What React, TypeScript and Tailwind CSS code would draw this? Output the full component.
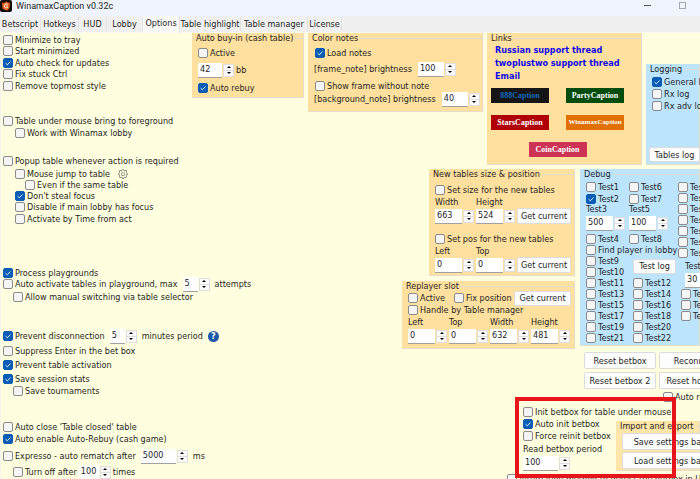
import { useState, type ReactNode } from "react";
import clsx from "clsx";
import { BsGear } from "react-icons/bs";

const TABS = [
  { name: "Betscript", width: "w-[41px]" },
  { name: "Hotkeys", width: "w-[38px]" },
  { name: "HUD", width: "w-[28px]" },
  { name: "Lobby", width: "w-[36px]" },
  { name: "Options", width: "w-[37px]" },
  { name: "Table highlight", width: "w-[61px]" },
  { name: "Table manager", width: "w-[67px]" },
  { name: "License", width: "w-[34px]" },
];

const SITES = [
  { name: "888Caption", style: "bg-[#151515] text-[#1668b8] text-[8px]" },
  { name: "PartyCaption", style: "bg-[#004c0b] text-white text-[8px]" },
  { name: "StarsCaption", style: "bg-[#b00008] text-white text-[8px]" },
  { name: "WinamaxCaption", style: "bg-[#e07000] text-white text-[7px]" },
  { name: "CoinCaption", style: "bg-[#cc3355] text-white text-[8px] col-span-2 justify-self-center" },
];

type CheckProps = { label: string; on?: boolean; className?: string };

function Check({ label, on = false, className }: CheckProps) {
  return (
    <label className={clsx("flex h-[11px] shrink-0 items-center gap-[2px]", className)}>
      <span className="relative size-[10px] shrink-0">
        <input
          type="checkbox"
          defaultChecked={on}
          className="peer block size-[10px] appearance-none rounded-[2px] border border-[#8b8b8b] bg-[#f5f5f5] checked:border-[#0a5cb4] checked:bg-[#0a5cb4]"
        />
        <svg viewBox="0 0 10 10" className="pointer-events-none absolute inset-0 hidden size-[10px] peer-checked:block">
          <path d="M2.6 5.2 4.3 6.8 7.5 3.5" fill="none" stroke="#dcebfa" strokeWidth="1" />
        </svg>
      </span>
      {label}
    </label>
  );
}

type SpinProps = { value: number; name: string; width?: string };

function Spin({ value, name, width = "w-[27px]" }: SpinProps) {
  const [n, setN] = useState(value);
  return (
    <span className="flex h-4 shrink-0 items-center gap-px">
      <input
        aria-label={name}
        value={n}
        onChange={(e) => setN(Number(e.target.value) || 0)}
        className={clsx("h-[15px] border-b border-[#a0a0a0] bg-white px-[2px] pb-px", width)}
      />
      <span className="flex h-[13px] w-[11px] flex-col border border-[#dedede] bg-[#fafafa]">
        <button aria-label={name + " up"} onClick={() => setN(n + 1)} className="flex flex-1 items-center justify-center border-b border-[#dedede]">
          <svg viewBox="0 0 4 2" className="h-[2px] w-1"><path d="M0 2 2 0 4 2z" /></svg>
        </button>
        <button aria-label={name + " down"} onClick={() => setN(n - 1)} className="flex flex-1 items-center justify-center">
          <svg viewBox="0 0 4 2" className="h-[2px] w-1"><path d="M0 0 2 2 4 0z" /></svg>
        </button>
      </span>
    </span>
  );
}

function Field({ label, value }: { label: string; value: number }) {
  return (
    <div className="w-[41px] shrink-0">
      <div className="h-[11px] leading-[11px]">{label}</div>
      <Spin value={value} name={label} />
    </div>
  );
}

function Btn({ children, className }: { children: ReactNode; className?: string }) {
  return (
    <button className={clsx("shrink-0 rounded-[2px] border border-[#dcdcdc] bg-[#fdfdfd] text-center leading-[12px]", className)}>
      {children}
    </button>
  );
}

type PanelProps = { title: string; className?: string; children: ReactNode };

function Panel({ title, className, children }: PanelProps) {
  return (
    <section className={clsx("border-r border-b border-[#e6dccb]", className)}>
      <h2 className="flex h-[11px] items-center gap-[2px] leading-[11px]">
        <span className="w-[2px] border-t border-[#dfdcd4]" />
        {title}
        <span className="flex-1 border-t border-[#dfdcd4]" />
      </h2>
      {children}
    </section>
  );
}

function TitleBar() {
  return (
    <header className="flex h-4 items-start bg-[#eff3fb]">
      <svg viewBox="0 0 12 12" className="size-3">
        <rect width="12" height="12" rx="2" fill="#120b08" />
        <path d="M2 2.5 4.5 3 6 1.5 8 2.5 10 3 9.5 8 7.5 10.5 5 10 2.5 8.5z" fill="#e8601c" />
        <path d="M7.8 4.3C6 3.2 4.2 4.6 4.4 6.2 4.6 7.8 6.4 8.4 7.8 7.4" fill="none" stroke="#fff" strokeWidth="1" />
        <path d="M6 6h2" stroke="#fff" strokeWidth=".8" />
      </svg>
      <h1 className="ml-1 flex-1 font-['Roboto',sans-serif] leading-3">WinamaxCaption v0.32c</h1>
      <button aria-label="Minimize" className="mr-7 flex h-[11px] w-[7px] items-center">
        <span className="h-px w-full bg-[#555]" />
      </button>
      <button aria-label="Maximize" className="mt-[2px] mr-[14px] size-[7px] border border-[#a5a8ad]" />
    </header>
  );
}

function Tabs() {
  return (
    <nav className="flex h-[17px] items-start border-b border-[#f8f8f4] bg-[#f0f0f0]">
      {TABS.map((t) => (
        <button
          key={t.name}
          className={clsx(
            "shrink-0 border-r border-[#e2e2e2] text-center",
            t.width,
            t.name === "Options" ? "h-[17px] bg-[#fafafa] pb-[3px]" : "mt-px h-[14px]",
          )}
        >
          {t.name}
        </button>
      ))}
    </nav>
  );
}

function GeneralOptions() {
  return (
    <div className="w-[191px] shrink-0 pt-px pl-[2px]">
      <Check label="Minimize to tray" />
      <Check label="Start minimized" />
      <Check label="Auto check for updates" on className="mt-px" />
      <Check label="Fix stuck Ctrl" />
      <Check label="Remove topmost style" className="mt-px" />

      <Check label="Table under mouse bring to foreground" className="mt-6" />
      <Check label="Work with Winamax lobby" className="mt-px ml-3" />

      <Check label="Popup table whenever action is required" className="mt-[17px]" />
      <div className="mt-[2px] flex h-[11px] items-center gap-2">
        <Check label="Mouse jump to table" className="ml-3" />
        <button aria-label="Mouse jump settings" className="shrink-0 text-[#6d6d66]"><BsGear size={10} /></button>
      </div>
      <Check label="Even if the same table" className="ml-[22px]" />
      <Check label="Don't steal focus" on className="ml-3" />
      <Check label="Disable if main lobby has focus" className="ml-3" />
      <Check label="Activate by Time from act" className="mt-px ml-3" />

      <Check label="Process playgrounds" on className="mt-[43px]" />
      <div className="flex h-3 items-center gap-[5px]">
        <Check label="Auto activate tables in playground, max" />
        <Spin value={5} name="Attempts" width="w-[15px]" />
        <span>attempts</span>
      </div>
      <Check label="Allow manual switching via table selector" className="mt-px ml-[10px]" />

      <div className="mt-[26px] flex h-4 items-center gap-[5px]">
        <Check label="Prevent disconnection" on />
        <Spin value={5} name="Minutes period" width="w-[15px]" />
        <span>minutes period</span>
        <button aria-label="Help" className="flex size-[11px] shrink-0 items-center justify-center rounded-full bg-[#1c57a8] font-bold text-white">
          ?
        </button>
      </div>
      <Check label="Suppress Enter in the bet box" className="mt-px" />
      <Check label="Prevent table activation" on className="mt-[3px]" />
      <Check label="Save session stats" on className="mt-[3px]" />
      <Check label="Save tournaments" className="mt-px ml-[10px]" />

      <Check label="Auto close 'Table closed' table" className="mt-[25px]" />
      <Check label="Auto enable Auto-Rebuy (cash game)" on className="mt-px" />
      <div className="mt-1 flex h-4 items-center gap-[5px]">
        <Check label="Expresso - auto rematch after" />
        <Spin value={5000} name="Rematch delay" width="w-[35px]" />
        <span>ms</span>
      </div>
      <div className="ml-[10px] flex h-4 items-center gap-[2px]">
        <Check label="Turn off after" />
        <Spin value={100} name="Turn off times" width="w-5" />
        <span>times</span>
      </div>
    </div>
  );
}

function TopPanels() {
  return (
    <div className="flex items-start gap-1">
      <Panel title="Auto buy-in (cash table)" className="w-[112px] shrink-0 bg-[#ffe09f] pb-1">
        <div className="pl-[6px]">
          <Check label="Active" className="mt-[3px]" />
          <div className="mt-1 flex items-center gap-[2px]">
            <Spin value={42} name="Buy-in" width="w-6" />
            <span>bb</span>
          </div>
          <Check label="Auto rebuy" on className="mt-1" />
        </div>
      </Panel>

      <Panel title="Color notes" className="w-[175px] shrink-0 bg-[#ffe09f] pb-1">
        <div className="pl-[6px]">
          <Check label="Load notes" on className="mt-[3px] ml-px" />
          <div className="mt-[3px] flex items-center gap-[6px]">
            <span>[frame_note] brightness</span>
            <Spin value={100} name="Frame note brightness" width="w-[26px]" />
          </div>
          <Check label="Show frame without note" className="mt-[3px] ml-px" />
          <div className="flex items-center gap-[6px]">
            <span>[background_note] brightness</span>
            <Spin value={40} name="Background note brightness" width="w-[26px]" />
          </div>
        </div>
      </Panel>

      <Panel title="Links" className="w-[155px] shrink-0 bg-[#ffe09f] pb-[7px]">
        <div className="ml-2 flex flex-col items-start font-bold leading-[13px] text-[#0d08e8]">
          <a href="#russian">Russian support thread</a>
          <a href="#twoplustwo">twoplustwo support thread</a>
          <a href="#email">Email</a>
        </div>
        <div className="mt-[5px] ml-1 grid w-[133px] grid-cols-[58px_58px] justify-between gap-y-3">
          {SITES.map((s) => (
            <a
              key={s.name}
              href={"#" + s.name}
              className={clsx("h-[15px] w-[58px] text-center font-['Liberation_Serif',serif] leading-[15px] font-bold", s.style)}
            >
              {s.name}
            </a>
          ))}
        </div>
      </Panel>

      <Panel title="Logging" className="mt-[31px] min-w-0 flex-1 bg-[#bce4fc] pb-[2px]">
        <div className="pl-[6px]">
          <Check label="General log" on className="mt-px" />
          <Check label="Rx log" className="mt-px" />
          <Check label="Rx adv log" className="mt-px" />
        </div>
        <Btn className="mt-[36px] ml-[3px] h-[15px] w-[51px]">Tables log</Btn>
      </Panel>
    </div>
  );
}

function TablePanels() {
  return (
    <div className="flex w-[173px] shrink-0 flex-col items-end">
      <Panel title="New tables size & position" className="w-[146px] bg-[#ffe09f] pb-[2px]">
        <div className="pl-[6px]">
          <Check label="Set size for the new tables" className="mt-1" />
          <div className="mt-[2px] flex items-end">
            <Field label="Width" value={663} />
            <Field label="Height" value={524} />
            <Btn className="h-4 w-[54px]">Get current</Btn>
          </div>
          <Check label="Set pos for the new tables" className="mt-[9px]" />
          <div className="mt-[2px] flex items-end">
            <Field label="Left" value={0} />
            <Field label="Top" value={0} />
            <Btn className="h-4 w-[54px]">Get current</Btn>
          </div>
        </div>
      </Panel>

      <Panel title="Replayer slot" className="mt-[5px] w-full bg-[#ffe09f] pb-1">
        <div className="pl-[6px]">
          <div className="flex h-3 items-center">
            <Check label="Active" className="w-[46px]" />
            <Check label="Fix position" className="w-[60px]" />
            <Btn className="h-[15px] w-[57px]">Get current</Btn>
          </div>
          <Check label="Handle by Table manager" />
          <div className="mt-[2px] flex">
            <Field label="Left" value={0} />
            <Field label="Top" value={0} />
            <Field label="Width" value={632} />
            <Field label="Height" value={481} />
          </div>
        </div>
      </Panel>
    </div>
  );
}

function DebugPanel() {
  const pairs = [[11, 12], [13, 14], [15, 16], [17, 18], [19, 20], [21, 22]];
  return (
    <Panel title="Debug" className="bg-[#bce4fc] pb-[2px]">
      <div className="flex pt-px pl-[6px]">
        <div className="w-[92px] shrink-0">
          <div className="flex"><Check label="Test1" className="w-[43px]" /><Check label="Test6" /></div>
          <div className="mt-px flex"><Check label="Test2" on className="w-[43px]" /><Check label="Test7" /></div>
          <div className="flex gap-[2px]">
            <Field label="Test3" value={500} />
            <Field label="Test5" value={100} />
          </div>
          <div className="mt-[2px] flex"><Check label="Test4" className="w-[43px]" /><Check label="Test8" /></div>
          <Check label="Find player in lobby" />
          <div className="flex items-center">
            <div className="w-[47px]">
              <Check label="Test9" />
              <Check label="Test10" />
            </div>
            <Btn className="h-[15px] w-[43px]">Test log</Btn>
          </div>
          {pairs.map(([a, b]) => (
            <div key={a} className="flex">
              <Check label={"Test" + a} className="w-[47px]" />
              <Check label={"Test" + b} />
            </div>
          ))}
        </div>
        <div>
          {[23, 24, 25, 26, 27, 28, 29].map((n) => (
            <Check key={n} label={"Test" + n} />
          ))}
          <div className="mt-[3px] ml-[7px]"><Field label="Test30" value={30} /></div>
          {[31, 32, 33].map((n) => (
            <Check key={n} label={"Test" + n} className="ml-[3px]" />
          ))}
        </div>
      </div>
    </Panel>
  );
}

function BetboxOptions() {
  return (
    <div className="relative mt-[3px] ml-[315px]">
      <div className="flex items-start pl-4">
        <div className="w-[93px] shrink-0">
          <Check label="Init betbox for table under mouse" className="mt-px" />
          <Check label="Auto init betbox" on className="mt-px" />
          <Check label="Force reinit betbox" className="mt-px" />
          <div className="mt-[3px] h-[11px] leading-[11px]">Read betbox period</div>
          <Spin value={100} name="Read betbox period" width="w-[35px]" />
        </div>
        <Panel title="Import and export" className="mt-4 min-w-0 flex-1 bg-[#ffe5a8] pb-px">
          <div className="ml-[6px] flex flex-col gap-[2px] pt-px">
            <Btn className="h-[17px] w-[110px]">Save settings backup</Btn>
            <Btn className="h-[17px] w-[110px]">Load settings backup</Btn>
          </div>
        </Panel>
      </div>
      <Check label="Alternative method to detect the betbox in UI" className="mt-[2px]" />
      <div className="pointer-events-none absolute -top-2 left-2 h-[81px] w-[161px] border-4 border-[#e8141c]" />
    </div>
  );
}

export default function App() {
  return (
    <div className="flex h-screen flex-col overflow-hidden bg-[#ffffe0] font-['DejaVu_Sans_Condensed','DejaVu_Sans',sans-serif] text-[9px] leading-[12px] whitespace-nowrap text-[#26261f]">
      <TitleBar />
      <Tabs />
      <main className="flex min-h-0 flex-1 border-l border-[#f4f4f0]">
        <GeneralOptions />
        <div className="min-w-0 flex-1">
          <TopPanels />
          <div className="mt-1 flex items-start gap-[5px] pl-[210px]">
            <TablePanels />
            <div className="min-w-0 flex-1">
              <DebugPanel />
              <div className="mt-[6px] ml-1 grid grid-cols-[72px_72px] gap-x-[3px] gap-y-[3px]">
                <Btn className="h-[17px]">Reset betbox</Btn>
                <Btn className="h-[17px]">Reconnect</Btn>
                <Btn className="h-[17px]">Reset betbox 2</Btn>
                <Btn className="h-[17px]">Reset hotkeys</Btn>
              </div>
              <Check label="Auto reset" className="mt-[2px] ml-[83px]" />
            </div>
          </div>
          <BetboxOptions />
        </div>
      </main>
    </div>
  );
}
